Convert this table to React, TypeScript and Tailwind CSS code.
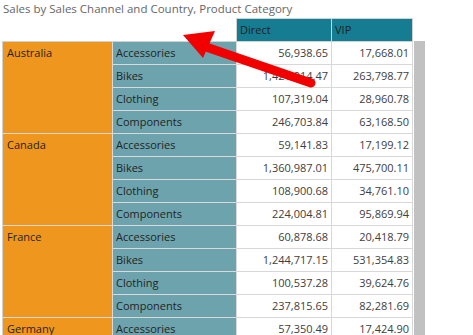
import React from "react";

const groups = [
  {
    country: "Australia",
    rows: [
      ["Accessories", "56,938.65", "17,668.01"],
      ["Bikes", "1,421,914.47", "263,798.77"],
      ["Clothing", "107,319.04", "28,960.78"],
      ["Components", "246,703.84", "63,168.50"],
    ],
  },
  {
    country: "Canada",
    rows: [
      ["Accessories", "59,141.83", "17,199.12"],
      ["Bikes", "1,360,987.01", "475,700.11"],
      ["Clothing", "108,900.68", "34,761.10"],
      ["Components", "224,004.81", "95,869.94"],
    ],
  },
  {
    country: "France",
    rows: [
      ["Accessories", "60,878.68", "20,418.79"],
      ["Bikes", "1,244,717.15", "531,354.83"],
      ["Clothing", "100,537.28", "39,624.76"],
      ["Components", "237,815.65", "82,281.69"],
    ],
  },
  {
    country: "Germany",
    rows: [["Accessories", "57,350.49", "17,424.90"]],
  },
];

const Arrow = () => {
  return (
    <svg
      className="absolute left-0 top-0 pointer-events-none"
      width="473"
      height="335"
      viewBox="0 0 473 335"
    >
      <line
        x1="206"
        y1="47"
        x2="311"
        y2="83"
        stroke="#f20000"
        strokeWidth="9"
        strokeLinecap="round"
      />
      <polygon points="183,35 215,31 203,58" fill="#f20000" />
    </svg>
  );
};

export default function App() {
  return (
    <div className="relative h-[335px] w-[473px] overflow-hidden bg-white font-['Open_Sans',sans-serif] text-[11px]">
      <div className="h-[18px] pl-[3px] leading-[18px] text-[#666666] text-[11.5px]">
        Sales by Sales Channel and Country, Product Category
      </div>
      <div className="ml-[236px] flex w-[177px] border-l border-t border-[#d2d2d2] bg-[#167c92] text-[#1e1e1e]">
        <div className="w-[95px] border-r border-[#d2d2d2] pl-[3px] leading-[22px]">
          Direct
        </div>
        <div className="w-[81px] border-r border-[#d2d2d2] pl-[3px] leading-[22px]">
          VIP
        </div>
      </div>
      <div className="flex">
        <div className="ml-[2px] grid grid-cols-[110px_124px_95px_81px] auto-rows-[23px] border-l border-t border-[#d2d2d2]">
          {groups.map((g) => (
            <React.Fragment key={g.country}>
              <div
                className={`${
                  g.rows.length === 4 ? "row-span-4" : "row-span-1"
                } border-r border-b border-[#dadada] bg-[#ef961f] pl-[4px] leading-[22px] text-[#252423]`}
                style={{ gridColumn: 1 }}
              >
                {g.country}
              </div>
              {g.rows.map((r, i) => (
                <React.Fragment key={r[0]}>
                  <div
                    className="border-r border-b border-[#dadada] bg-[#6ca3ad] pl-[3px] leading-[22px] text-[#252423]"
                    style={{ gridColumn: 2 }}
                  >
                    {r[0]}
                  </div>
                  <div className="border-r border-b border-[#d8d8d8] pr-[3px] text-right leading-[22px] text-[#404040]">
                    {r[1]}
                  </div>
                  <div className="border-r border-b border-[#d8d8d8] pr-[3px] text-right leading-[22px] text-[#404040]">
                    {r[2]}
                  </div>
                </React.Fragment>
              ))}
            </React.Fragment>
          ))}
        </div>
        <div className="ml-px h-[300px] w-[11px] bg-[#c1c1c1]" />
      </div>
      <Arrow />
    </div>
  );
}
